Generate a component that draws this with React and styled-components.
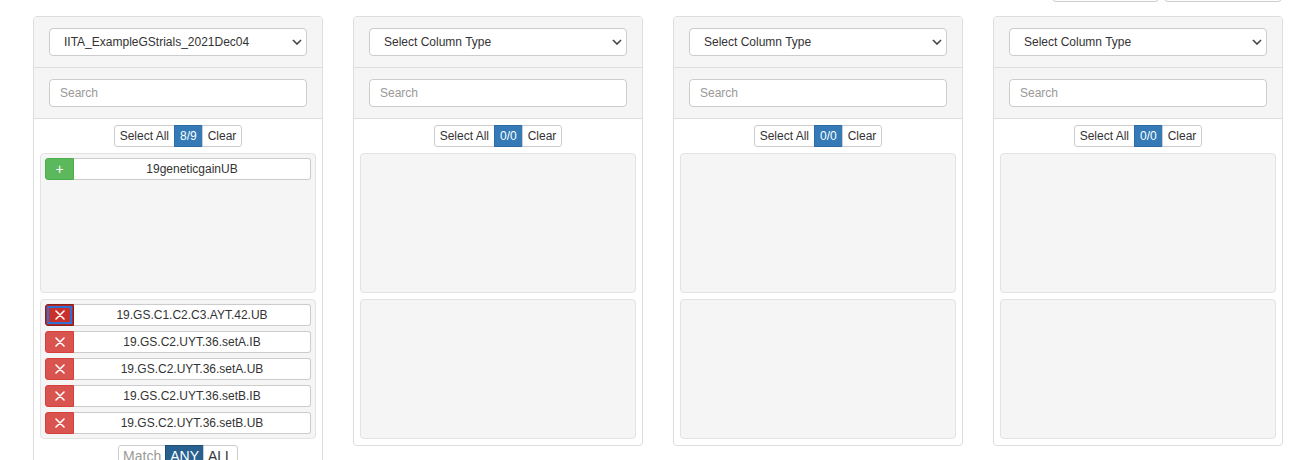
import React from 'react'
import styled, { createGlobalStyle } from 'styled-components'

const GlobalStyle = createGlobalStyle`
  body {
    margin: 0;
    background: #fff;
    font-family: "Liberation Sans", Arial, sans-serif;
    color: #333;
    overflow: hidden;
  }
`

const Page = styled.div`
  padding-left: 33px;
  width: 1250px;
`

const Toolbar = styled.div`
  display: flex;
  justify-content: flex-end;
  gap: 5px;
  margin-top: -28px;
  padding-right: 1px;
`

const ToolButton = styled.button`
  width: ${({ w }) => w}px;
  height: 30px;
  background: #fff;
  border: 1px solid #ccc;
  border-radius: 4px;
`

const PanelRow = styled.div`
  display: flex;
  align-items: flex-start;
  gap: 30px;
  margin-top: 14px;
`

const Panel = styled.div`
  width: 290px;
  box-sizing: border-box;
  border: 1px solid #ddd;
  border-radius: 4px;
  background: #fff;
  flex-shrink: 0;
`

const Section = styled.div`
  background: #f5f5f5;
  padding: 11px 15px;
  border-bottom: 1px solid #ddd;
  border-radius: ${({ top }) => (top ? '3px 3px 0 0' : '0')};
`

const SelectWrap = styled.div`
  position: relative;
`

const Select = styled.select`
  appearance: none;
  display: block;
  width: 100%;
  height: 28px;
  box-sizing: border-box;
  border: 1px solid #ccc;
  border-radius: 4px;
  background: #fff;
  padding: 0 30px 0 14px;
  font: 12px "Liberation Sans", Arial, sans-serif;
  color: #333;
`

const Chevron = styled.svg`
  position: absolute;
  right: 5px;
  top: 11px;
  pointer-events: none;
`

const Search = styled.input`
  display: block;
  width: 100%;
  height: 28px;
  box-sizing: border-box;
  border: 1px solid #ccc;
  border-radius: 4px;
  padding: 0 10px;
  font: 12px "Liberation Sans", Arial, sans-serif;
  color: #333;
  &::placeholder {
    color: #999;
  }
`

const Body = styled.div`
  padding: 6px 6px 6px;
  display: flex;
  flex-direction: column;
  align-items: center;
  gap: 6px;
`

const Group = styled.div`
  display: flex;
`

const GroupButton = styled.button`
  height: ${({ size }) => (size === 'md' ? 30 : 22)}px;
  padding: 0 ${({ size }) => (size === 'md' ? 4 : 5)}px;
  font: ${({ size }) => (size === 'md' ? 14 : 12)}px "Liberation Sans", Arial, sans-serif;
  line-height: ${({ size }) => (size === 'md' ? '20px' : 'normal')};
  display: flex;
  align-items: ${({ size }) => (size === 'md' ? 'flex-start' : 'center')};
  border: 1px solid ${({ variant }) =>
    variant === 'primary' ? '#2e6da4' : variant === 'dark' ? '#204d74' : '#ccc'};
  background: ${({ variant }) =>
    variant === 'primary' ? '#337ab7' : variant === 'dark' ? '#286090' : '#fff'};
  color: ${({ variant }) =>
    variant === 'primary' || variant === 'dark' ? '#fff' : variant === 'muted' ? '#999' : '#333'};
  margin-left: -1px;
  border-radius: 0;
  &:first-child {
    margin-left: 0;
    border-radius: 3px 0 0 3px;
  }
  &:last-child {
    border-radius: 0 3px 3px 0;
  }
`

const Box = styled.div`
  align-self: stretch;
  height: 140px;
  box-sizing: border-box;
  background: #f5f5f5;
  border: 1px solid #e3e3e3;
  border-radius: 4px;
  padding: 4px;
  display: flex;
  flex-direction: column;
  gap: 5px;
`

const Item = styled.div`
  display: flex;
  height: 22px;
`

const IconButton = styled.button`
  width: 29px;
  height: 22px;
  flex-shrink: 0;
  padding: 0;
  display: flex;
  align-items: center;
  justify-content: center;
  border-radius: 3px 0 0 3px;
  color: #fff;
  font: 14px "Liberation Sans", Arial, sans-serif;
  border: 1px solid ${({ add, focused }) => (add ? '#4cae4c' : focused ? '#8c1f1c' : '#d43f3a')};
  background: ${({ add, focused }) => (add ? '#5cb85c' : focused ? '#c9302c' : '#d9534f')};
  box-shadow: ${({ focused }) => (focused ? 'inset 0 0 0 1px #b02a26, inset 0 0 0 3px #2f6fd8' : 'none')};
`

const ItemLabel = styled.div`
  flex: 1;
  box-sizing: border-box;
  border: 1px solid #ccc;
  border-left: none;
  border-radius: 0 3px 3px 0;
  background: #fff;
  font-size: 12px;
  line-height: 20px;
  text-align: center;
  color: #333;
`

const Cross = () => (
  <svg width="10" height="10" viewBox="0 0 10 10">
    <path d="M1 1 L9 9 M9 1 L1 9" stroke="#fff" strokeWidth="1.6" strokeLinecap="round" />
  </svg>
)

const selected = [
  '19.GS.C1.C2.C3.AYT.42.UB',
  '19.GS.C2.UYT.36.setA.IB',
  '19.GS.C2.UYT.36.setA.UB',
  '19.GS.C2.UYT.36.setB.IB',
  '19.GS.C2.UYT.36.setB.UB',
]

const ColumnPanel = ({ title, count, available = [], chosen = [], match }) => (
  <Panel>
    <Section top>
      <SelectWrap>
        <Select defaultValue={title}>
          <option>{title}</option>
        </Select>
        <Chevron width="10" height="6" viewBox="0 0 10 6">
          <polyline points="1,1 5,5 9,1" fill="none" stroke="#444" strokeWidth="1.6" />
        </Chevron>
      </SelectWrap>
    </Section>
    <Section>
      <Search placeholder="Search" />
    </Section>
    <Body>
      <Group>
        <GroupButton>Select All</GroupButton>
        <GroupButton variant="primary">{count}</GroupButton>
        <GroupButton>Clear</GroupButton>
      </Group>
      <Box>
        {available.map((name) => (
          <Item key={name}>
            <IconButton add>+</IconButton>
            <ItemLabel>{name}</ItemLabel>
          </Item>
        ))}
      </Box>
      <Box>
        {chosen.map((name, i) => (
          <Item key={name}>
            <IconButton focused={i === 0}>
              <Cross />
            </IconButton>
            <ItemLabel>{name}</ItemLabel>
          </Item>
        ))}
      </Box>
      {match && (
        <Group>
          <GroupButton size="md" variant="muted">Match</GroupButton>
          <GroupButton size="md" variant="dark">ANY</GroupButton>
          <GroupButton size="md">ALL</GroupButton>
        </Group>
      )}
    </Body>
  </Panel>
)

export default function App() {
  return (
    <Page>
      <GlobalStyle />
      <Toolbar>
        <ToolButton w={107} />
        <ToolButton w={118} />
      </Toolbar>
      <PanelRow>
        <ColumnPanel
          title="IITA_ExampleGStrials_2021Dec04"
          count="8/9"
          available={['19geneticgainUB']}
          chosen={selected}
          match
        />
        <ColumnPanel title="Select Column Type" count="0/0" />
        <ColumnPanel title="Select Column Type" count="0/0" />
        <ColumnPanel title="Select Column Type" count="0/0" />
      </PanelRow>
    </Page>
  )
}
